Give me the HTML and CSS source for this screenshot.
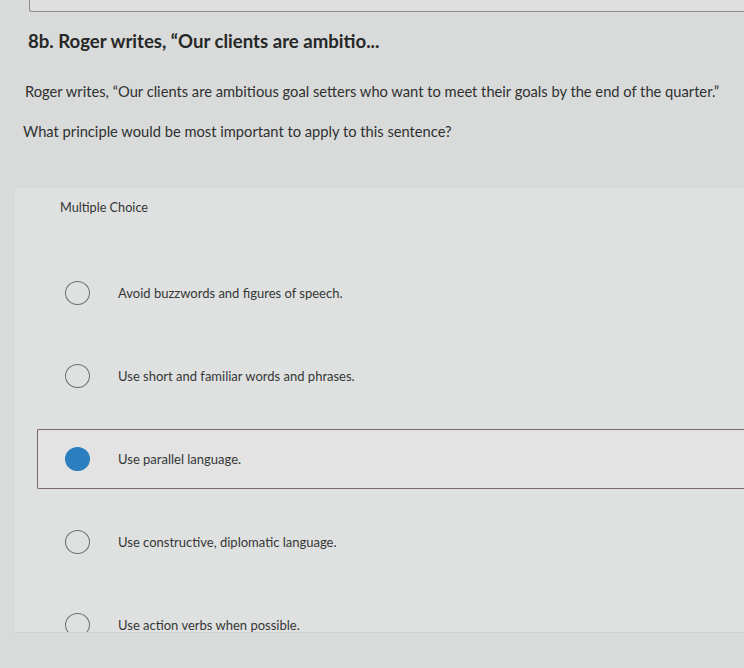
FILE: index.html
```html
<!DOCTYPE html>
<html lang="en">
<head>
<meta charset="utf-8">
<title>8b. Roger writes</title>
<link rel="stylesheet" href="styles.css">
</head>
<body>
<div class="prev-card"></div>
<main class="question">
  <h1 class="q-title">8b. Roger writes, “Our clients are ambitio...</h1>
  <p class="q-text">Roger writes, “Our clients are ambitious goal setters who want to meet their goals by the end of the quarter.”</p>
  <p class="q-prompt">What principle would be most important to apply to this sentence?</p>
</main>
<section class="panel">
  <div class="panel-head">Multiple Choice</div>
  <ul class="choices">
    <li class="choice"><span class="radio"></span><span class="choice-text">Avoid buzzwords and figures of speech.</span></li>
    <li class="choice"><span class="radio"></span><span class="choice-text">Use short and familiar words and phrases.</span></li>
    <li class="choice selected"><span class="radio"></span><span class="choice-text">Use parallel language.</span></li>
    <li class="choice"><span class="radio"></span><span class="choice-text">Use constructive, diplomatic language.</span></li>
    <li class="choice"><span class="radio"></span><span class="choice-text">Use action verbs when possible.</span></li>
  </ul>
</section>
</body>
</html>
```

FILE: styles.css
```css
html, body {
  margin: 0;
  padding: 0;
}
body {
  background: #d9dbda;
  font-family: Lato, "Liberation Sans", sans-serif;
  color: #2f3131;
  width: 744px;
  height: 668px;
  overflow: hidden;
}
.prev-card {
  height: 11px;
  margin-left: 29px;
  border-left: 1px solid #8a8c8b;
  border-bottom: 1px solid #8a8c8b;
  border-bottom-left-radius: 3px;
  background: #dedfde;
}
.question {
  padding: 0 0 0 28px;
}
.q-title {
  margin: 18px 0 0 0;
  font-size: 18.6px;
  line-height: 22px;
  font-weight: 700;
  color: #262828;
}
.q-text {
  margin: 29px 0 0 -3px;
  font-size: 14.7px;
  line-height: 20px;
}
.q-prompt {
  margin: 20px 0 0 -5px;
  font-size: 14.7px;
  line-height: 20px;
}
.panel {
  margin: 47px 0 0 15px;
  background: #dfe1e0;
  height: 444px;
  overflow: hidden;
  border-bottom: 1px solid #cfd1d0;
}
.panel-head {
  height: 38px;
  line-height: 38px;
  padding-left: 45px;
  font-size: 12.7px;
  color: #333535;
}
.choices {
  list-style: none;
  margin: 0;
  padding: 37px 0 0 0;
  display: flex;
  flex-direction: column;
  gap: 23px;
}
.choice {
  box-sizing: border-box;
  height: 60px;
  margin-left: 22px;
  display: flex;
  align-items: center;
  padding-left: 27px;
  border: 1px solid transparent;
  border-right: none;
  border-radius: 2px 0 0 2px;
  font-size: 13px;
  color: #353737;
}
.choice.selected {
  border-color: #7e6566;
  background: #e2e3e2;
}
.radio {
  box-sizing: border-box;
  width: 25px;
  height: 24px;
  border-radius: 50%;
  border: 1.5px solid #6d7070;
  flex: none;
}
.selected .radio {
  background: #2b7fbf;
  border-color: #2b7fbf;
}
.choice-text {
  margin-left: 28px;
}
```
